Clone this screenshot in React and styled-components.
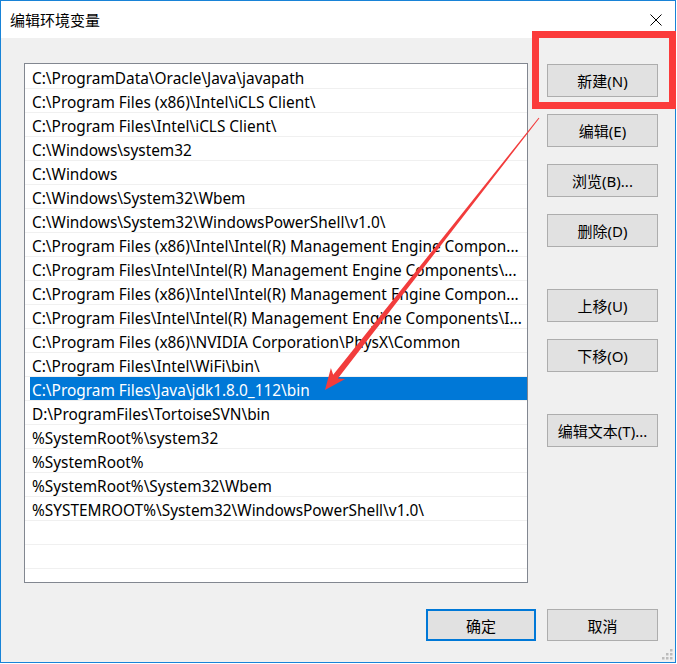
import React from 'react';
import styled, { createGlobalStyle } from 'styled-components';

const GlobalStyle = createGlobalStyle`
  body {
    margin: 0;
    background: #ffffff;
    font-family: "Noto Sans", "Noto Sans CJK SC", sans-serif;
  }
`

const Page = styled.div`
  position: relative;
  width: 677px;
  height: 664px;
`

const Window = styled.div`
  box-sizing: border-box;
  width: 676px;
  height: 663px;
  border: 1px solid #1883d7;
  background: #f0f0f0;
  display: flex;
  flex-direction: column;
  position: relative;
`

const TitleBar = styled.div`
  height: 37px;
  background: #ffffff;
  display: flex;
  align-items: center;
  justify-content: space-between;
  padding: 0 13px 0 9px;
  box-sizing: border-box;
`

const Title = styled.span`
  font-family: "Noto Sans CJK SC", sans-serif;
  font-size: 15px;
  color: #000000;
`

const CloseIcon = styled.svg`
  display: block;
  width: 12px;
  height: 12px;
`

const Body = styled.div`
  flex: 1;
  display: flex;
  flex-direction: column;
  padding: 25px 17px 0 23px;
`

const Top = styled.div`
  display: flex;
  gap: 19px;
`

const List = styled.div`
  box-sizing: border-box;
  width: 504px;
  height: 520px;
  border: 1px solid #828790;
  background: #ffffff;
  padding-top: 1px;
  overflow: hidden;
`

const Row = styled.div`
  height: 23px;
  border-bottom: 1px solid #f0f0f0;
  padding-left: 5px;
  display: flex;
`

const Cell = styled.div`
  flex: 1;
  padding: 3px 0 0 2px;
  display: flex;
  align-items: center;
  white-space: nowrap;
  overflow: hidden;
  font-size: 15.4px;
  color: ${props => props.selected ? '#ffffff' : '#000000'};
  background: ${props => props.selected ? '#0078d7' : 'transparent'};
`

const Side = styled.div`
  display: flex;
  flex-direction: column;
  gap: 42px;
  padding-top: 1px;
`

const Group = styled.div`
  display: flex;
  flex-direction: column;
  gap: 17px;
`

const Button = styled.button`
  box-sizing: border-box;
  width: ${props => props.w || 111}px;
  height: ${props => props.h || 33}px;
  background: #e1e1e1;
  border: ${props => props.primary ? '2px solid #0078d7' : '1px solid #adadad'};
  border-radius: 0;
  padding: 0;
  font-family: "Noto Sans", "Noto Sans CJK SC", sans-serif;
  font-size: 15px;
  color: #000000;
  outline: none;
`

const Footer = styled.div`
  display: flex;
  justify-content: flex-end;
  gap: 11px;
  margin-top: 26px;
`

const Grip = styled.svg`
  position: absolute;
  right: 2px;
  bottom: 1px;
  width: 12px;
  height: 12px;
`

const Overlay = styled.svg`
  position: absolute;
  left: 0;
  top: 0;
  width: 677px;
  height: 664px;
  pointer-events: none;
`

const paths = [
  'C:\\ProgramData\\Oracle\\Java\\javapath',
  'C:\\Program Files (x86)\\Intel\\iCLS Client\\',
  'C:\\Program Files\\Intel\\iCLS Client\\',
  'C:\\Windows\\system32',
  'C:\\Windows',
  'C:\\Windows\\System32\\Wbem',
  'C:\\Windows\\System32\\WindowsPowerShell\\v1.0\\',
  'C:\\Program Files (x86)\\Intel\\Intel(R) Management Engine Compon...',
  'C:\\Program Files\\Intel\\Intel(R) Management Engine Components\\...',
  'C:\\Program Files (x86)\\Intel\\Intel(R) Management Engine Compon...',
  'C:\\Program Files\\Intel\\Intel(R) Management Engine Components\\I...',
  'C:\\Program Files (x86)\\NVIDIA Corporation\\PhysX\\Common',
  'C:\\Program Files\\Intel\\WiFi\\bin\\',
  'C:\\Program Files\\Java\\jdk1.8.0_112\\bin',
  'D:\\ProgramFiles\\TortoiseSVN\\bin',
  '%SystemRoot%\\system32',
  '%SystemRoot%',
  '%SystemRoot%\\System32\\Wbem',
  '%SYSTEMROOT%\\System32\\WindowsPowerShell\\v1.0\\',
  '',
  '',
  '',
]

const selectedIndex = 13

// arrow from the red box down to the selected row
const arrowPoints = [
  [539.4, 118.3],
  [337.8, 378.4],
  [345.1, 379.1],
  [325, 390],
  [330.9, 367.9],
  [333.2, 374.8],
  [538.6, 117.7],
].map(p => p.join(',')).join(' ')

const gripDots = [
  [9, 0],
  [5, 4], [9, 4],
  [1, 8], [5, 8], [9, 8],
]

export default function App() {
  return (
    <Page>
      <GlobalStyle />
      <Window>
        <TitleBar>
          <Title>编辑环境变量</Title>
          <CloseIcon viewBox="0 0 12 12">
            <path d="M0.5 0.5 L11.5 11.5 M11.5 0.5 L0.5 11.5" stroke="#000" strokeWidth="1" />
          </CloseIcon>
        </TitleBar>
        <Body>
          <Top>
            <List>
              {paths.map((p, i) =>
                <Row key={i}>
                  <Cell selected={i === selectedIndex}>{p}</Cell>
                </Row>
              )}
            </List>
            <Side>
              <Group>
                <Button>新建(N)</Button>
                <Button>编辑(E)</Button>
                <Button>浏览(B)...</Button>
                <Button>删除(D)</Button>
              </Group>
              <Group>
                <Button>上移(U)</Button>
                <Button>下移(O)</Button>
              </Group>
              <Group>
                <Button>编辑文本(T)...</Button>
              </Group>
            </Side>
          </Top>
          <Footer>
            <Button primary w={110} h={32}>确定</Button>
            <Button h={32}>取消</Button>
          </Footer>
        </Body>
        <Grip viewBox="0 0 12 12">
          {gripDots.map(([x, y], i) => <rect key={i} x={x} y={y} width="2.5" height="2.5" fill="#bcbcbc" />)}
        </Grip>
      </Window>
      <Overlay viewBox="0 0 677 664">
        <rect x="535.5" y="34.5" width="137" height="71" fill="none" stroke="#fb3b3b" strokeWidth="7" />
        <polygon points={arrowPoints} fill="#f23c3c" />
      </Overlay>
    </Page>
  );
}
